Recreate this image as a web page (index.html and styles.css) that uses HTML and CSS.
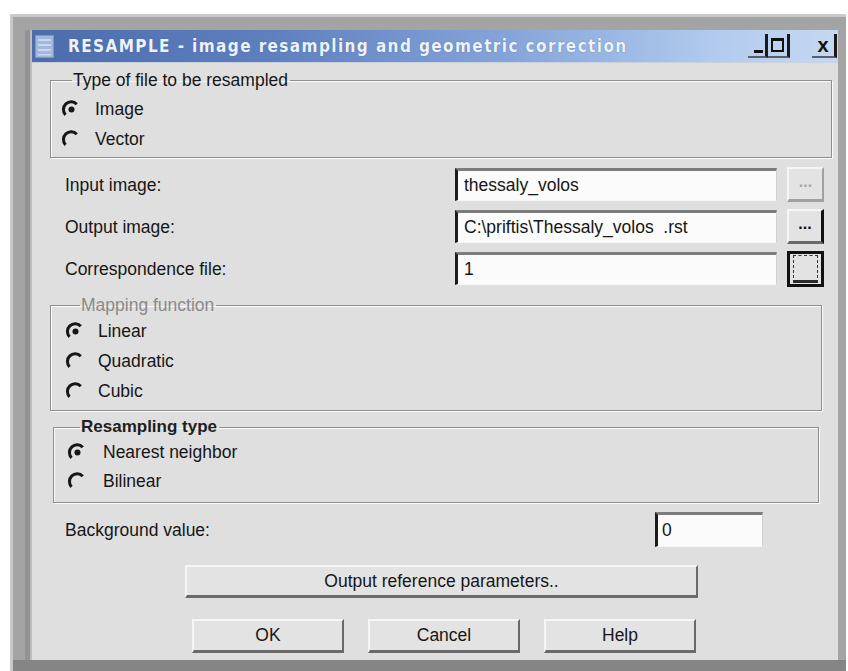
FILE: index.html
```html
<!DOCTYPE html>
<html lang="en">
<head>
<meta charset="utf-8">
<title>RESAMPLE</title>
<link rel="stylesheet" href="styles.css">
</head>
<body>
<div class="window">
  <div class="dialog">
    <div class="titlebar">
      <svg class="app-icon" width="19" height="23" viewBox="0 0 19 23">
        <rect x="0.5" y="0.5" width="18" height="22" fill="#9fb8dc" stroke="#7d98c4"/>
        <rect x="3" y="4" width="13" height="2" fill="#c9d8ee"/>
        <rect x="3" y="9" width="13" height="2" fill="#c9d8ee"/>
        <rect x="3" y="14" width="13" height="2" fill="#c9d8ee"/>
        <rect x="3" y="19" width="13" height="1.5" fill="#c9d8ee"/>
      </svg>
      <span class="title">RESAMPLE - image resampling and geometric correction</span>
      <div class="caption-buttons">
        <div class="cap-btn cap-min"><div class="min-bar"></div></div>
        <div class="cap-btn cap-max"><div class="max-box"></div></div>
        <div class="cap-btn cap-x">x</div>
      </div>
    </div>

    <fieldset class="group group-type">
      <legend>Type of file to be resampled</legend>
      <div class="radio-row"><svg class="radio" viewBox="0 0 18 18"><path d="M13.5 4.5A6.4 6.4 0 0 0 3.9 13.6"/><circle cx="9" cy="9" r="2.6"/></svg><span>Image</span></div>
      <div class="radio-row"><svg class="radio" viewBox="0 0 18 18"><path d="M13.5 4.5A6.4 6.4 0 0 0 3.9 13.6"/></svg><span>Vector</span></div>
    </fieldset>

    <div class="file-grid">
      <span class="label">Input image:</span>
      <div class="field">thessaly_volos</div>
      <div class="btn small disabled">...</div>

      <span class="label">Output image:</span>
      <div class="field">C:\priftis\Thessaly_volos&nbsp; .rst</div>
      <div class="btn small strong">...</div>

      <span class="label">Correspondence file:</span>
      <div class="field">1</div>
      <div class="btn small focused"><span class="focus-rect"></span></div>
    </div>

    <fieldset class="group group-map">
      <legend class="muted">Mapping function</legend>
      <div class="radio-row"><svg class="radio" viewBox="0 0 18 18"><path d="M13.5 4.5A6.4 6.4 0 0 0 3.9 13.6"/><circle cx="9" cy="9" r="2.6"/></svg><span>Linear</span></div>
      <div class="radio-row"><svg class="radio" viewBox="0 0 18 18"><path d="M13.5 4.5A6.4 6.4 0 0 0 3.9 13.6"/></svg><span>Quadratic</span></div>
      <div class="radio-row"><svg class="radio" viewBox="0 0 18 18"><path d="M13.5 4.5A6.4 6.4 0 0 0 3.9 13.6"/></svg><span>Cubic</span></div>
    </fieldset>

    <fieldset class="group group-res">
      <legend class="bold">Resampling type</legend>
      <div class="radio-row"><svg class="radio" viewBox="0 0 18 18"><path d="M13.5 4.5A6.4 6.4 0 0 0 3.9 13.6"/><circle cx="9" cy="9" r="2.6"/></svg><span>Nearest neighbor</span></div>
      <div class="radio-row"><svg class="radio" viewBox="0 0 18 18"><path d="M13.5 4.5A6.4 6.4 0 0 0 3.9 13.6"/></svg><span>Bilinear</span></div>
    </fieldset>

    <div class="bg-row">
      <span class="label">Background value:</span>
      <div class="field short">0</div>
    </div>

    <div class="btn wide">Output reference parameters..</div>

    <div class="button-row">
      <div class="btn push">OK</div>
      <div class="btn push">Cancel</div>
      <div class="btn push">Help</div>
    </div>
  </div>
</div>
</body>
</html>
```
FILE: styles.css
```css
html, body {
  margin: 0;
  padding: 0;
  background: #ffffff;
  width: 848px;
  height: 671px;
  overflow: hidden;
}

body {
  font-family: "Liberation Sans", Arial, sans-serif;
  font-size: 17.5px;
  color: #161616;
}

/* outer window frame */
.window {
  margin: 14px 0 0 10px;
  width: 806px;
  padding: 16px 8px 11px 22px;
  background: #a4a4a4;
  box-shadow: inset 3px 3px 0 #c9c9c9, inset 0 -11px 0 #858585;
}

.dialog {
  width: 806px;
  height: 630px;
  background: #dfdfdf;
  box-shadow: -2px 0 0 #bdbdbd, -7px 0 0 #939393;
  display: flex;
  flex-direction: column;
}

/* caption */
.titlebar {
  height: 32px;
  flex: none;
  display: flex;
  align-items: center;
  background: linear-gradient(to right, #4c6cab 0%, #5f80bf 30%, #86a6da 60%, #b2cbee 85%, #c6d8f2 100%);
  border-bottom: 1px solid #c8d0dc;
}

.app-icon {
  margin-left: 3px;
  flex: none;
}

.title {
  margin-left: 14px;
  font-family: "DejaVu Sans Condensed", "DejaVu Sans", sans-serif;
  font-weight: bold;
  font-size: 17px;
  letter-spacing: 1.4px;
  color: #eef3fb;
  text-shadow: 0 0 1px #3c5a96;
  white-space: nowrap;
}

.caption-buttons {
  margin-left: auto;
  margin-right: 1px;
  display: flex;
  align-items: stretch;
  height: 24px;
  flex: none;
}

.cap-btn {
  display: flex;
  align-items: center;
  justify-content: center;
  border-right: 3px solid #1a1a1a;
  border-bottom: 2px solid #5a5f68;
  font-weight: bold;
  font-size: 18px;
  color: #111;
  line-height: 1;
}

.cap-min {
  width: 14px;
  padding-left: 3px;
  align-items: flex-end;
}

.min-bar {
  width: 9px;
  height: 3px;
  margin-bottom: 3px;
  background: #111;
  flex: none;
}

.cap-max {
  width: 19px;
}

.cap-x {
  margin-left: 22px;
  width: 22px;
  font-size: 20px;
}

.max-box {
  width: 9px;
  height: 9px;
  border: 2px solid #111;
  border-top-width: 3px;
}

/* group boxes */
.group {
  margin: 0;
  padding: 0;
  border: 1px solid #8e8e8e;
  box-shadow: 1px 1px 0 #fafafa, inset 1px 1px 0 #fafafa;
  min-width: 0;
}

.group legend {
  padding: 0 2px 0 1px;
  margin-left: 11px;
  line-height: 24px;
  font-size: 17.5px;
}

.group legend.muted {
  color: #8a8a8a;
  line-height: 20px;
  margin-left: 15px;
}

.group legend.bold {
  font-weight: bold;
  color: #202020;
  line-height: 20px;
  margin-left: 13px;
  font-size: 17px;
}

.group-type {
  margin: 5px 6px 0 18px;
  padding: 2px 0 3px 10px;
}

.group-map {
  margin: 10px 16px 0 18px;
  padding: 1px 0 4px 14px;
}

.group-res {
  margin: 6px 19px 0 21px;
  padding: 1px 0 6px 13px;
}

.radio-row {
  height: 30px;
  display: flex;
  align-items: center;
}

.group-res .radio-row {
  height: 29px;
}

.radio {
  width: 21px;
  height: 21px;
  flex: none;
  margin-right: 13px;
}

.group-map .radio {
  margin-right: 12px;
}

.group-res .radio {
  margin-right: 15px;
}

.radio path {
  fill: none;
  stroke: #161616;
  stroke-width: 2.6;
}

.radio circle {
  fill: #161616;
}

/* file rows */
.file-grid {
  margin-top: 10px;
  padding-left: 33px;
  display: grid;
  grid-template-columns: 380px 322px 37px;
  grid-auto-rows: 33px;
  column-gap: 10px;
  row-gap: 9px;
  align-items: center;
}

.label {
  line-height: 20px;
}

.field {
  height: 33px;
  box-sizing: border-box;
  background: #fbfbfb;
  border-top: 3px solid #7c7c7c;
  border-left: 3px solid #1c1c1c;
  border-right: 1px solid #d0d0d0;
  border-bottom: 1px solid #f4f4f4;
  padding-left: 6px;
  display: flex;
  align-items: center;
  font-size: 17.5px;
  white-space: nowrap;
  overflow: hidden;
}

.btn {
  box-sizing: border-box;
  background: #e3e3e3;
  border-top: 2px solid #f6f6f6;
  border-left: 2px solid #f6f6f6;
  border-right: 2px solid #6a6a6a;
  border-bottom: 3px solid #6a6a6a;
  display: flex;
  align-items: center;
  justify-content: center;
  font-size: 17.5px;
}

.btn.small {
  height: 35px;
  font-weight: bold;
  font-size: 16px;
  padding-bottom: 4px;
}

.btn.disabled {
  color: #a6a6a6;
  border-right-color: #a0a0a0;
  border-bottom-color: #a0a0a0;
}

.btn.strong {
  border-right: 3px solid #111;
  color: #111;
}

.btn.focused {
  height: 36px;
  border: 3px solid #111;
  padding: 3px;
}

.focus-rect {
  width: 100%;
  height: 100%;
  border: 1px dashed #333;
  border-bottom: 3px solid #2a2a2a;
}

/* background value row */
.bg-row {
  margin-top: 9px;
  padding-left: 33px;
  height: 35px;
  display: grid;
  grid-template-columns: 590px 108px;
  align-items: center;
}

.field.short {
  height: 35px;
  padding-left: 4px;
}

.btn.wide {
  margin: 18px 0 0 153px;
  width: 513px;
  height: 33px;
}

.button-row {
  margin: 21px 0 0 160px;
  display: flex;
  gap: 24px;
}

.btn.push {
  width: 152px;
  height: 34px;
}
```
